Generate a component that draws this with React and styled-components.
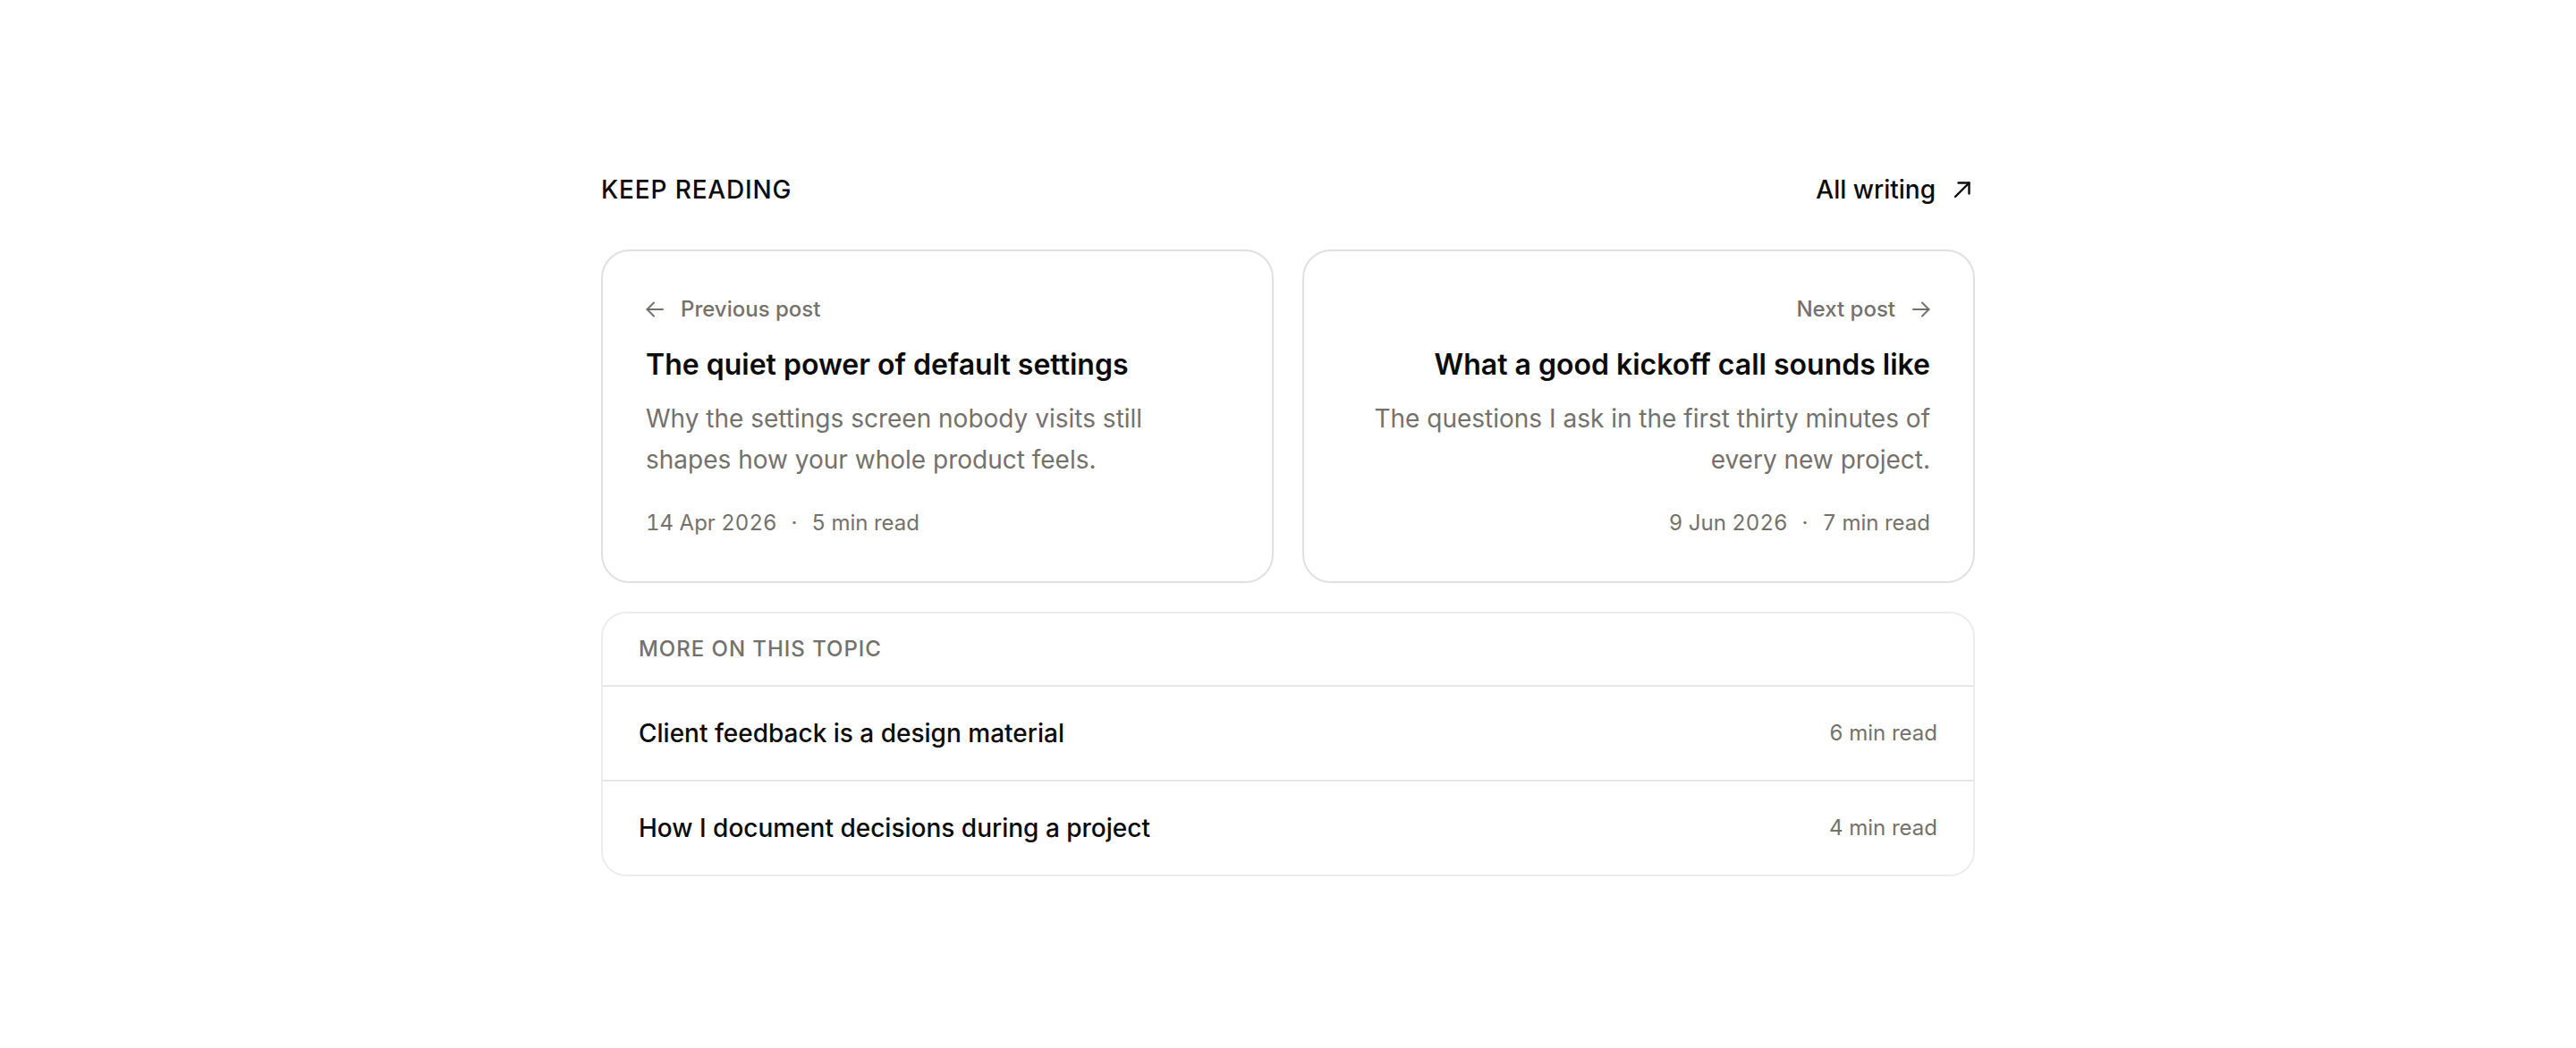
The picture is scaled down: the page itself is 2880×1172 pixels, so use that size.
import React from 'react'
import styled, { createGlobalStyle } from 'styled-components'

const GlobalStyle = createGlobalStyle`
  html, body {
    margin: 0;
    padding: 0;
    background: #ffffff;
  }
  body {
    font-family: Inter, "Noto Sans", "Liberation Sans", sans-serif;
    color: #0b0b0b;
    -webkit-font-smoothing: antialiased;
  }
  * {
    box-sizing: border-box;
  }
`;

const muted = '#74716d';

const posts = {
    prev: {
        label: 'Previous post',
        title: 'The quiet power of default settings',
        excerpt: 'Why the settings screen nobody visits still shapes how your whole product feels.',
        date: '14 Apr 2026',
        read: '5 min read',
    },
    next: {
        label: 'Next post',
        title: 'What a good kickoff call sounds like',
        excerpt: 'The questions I ask in the first thirty minutes of every new project.',
        date: '9 Jun 2026',
        read: '7 min read',
    },
};

const related = [
    { title: 'Client feedback is a design material', read: '6 min read' },
    { title: 'How I document decisions during a project', read: '4 min read' },
];

function ArrowLeft() {
    return (
        <svg width="20" height="18" viewBox="0 0 20 18" fill="none" stroke="currentColor" strokeWidth="2" strokeLinecap="round" strokeLinejoin="round">
            <path d="M19 9H1.5" />
            <path d="M9 1.5 1.5 9 9 16.5" />
        </svg>
    )
}

function ArrowRight() {
    return (
        <svg width="20" height="18" viewBox="0 0 20 18" fill="none" stroke="currentColor" strokeWidth="2" strokeLinecap="round" strokeLinejoin="round">
            <path d="M1 9h17.5" />
            <path d="M11 1.5 18.5 9 11 16.5" />
        </svg>
    )
}

function ArrowUpRight() {
    return (
        <svg width="20" height="20" viewBox="0 0 20 20" fill="none" stroke="currentColor" strokeWidth="2.4" strokeLinecap="round" strokeLinejoin="round">
            <path d="M2 18 17.5 2.5" />
            <path d="M5.5 2.5h12v12" />
        </svg>
    )
}

function PostCard({ post, align }) {
    const right = align === 'right'
    return (
        <Card $right={right}>
            <CardLabel>
                {!right && <ArrowLeft />}
                <span>{post.label}</span>
                {right && <ArrowRight />}
            </CardLabel>
            <CardTitle>{post.title}</CardTitle>
            <Excerpt>{post.excerpt}</Excerpt>
            <Meta>
                <span>{post.date}</span>
                <Dot>·</Dot>
                <span>{post.read}</span>
            </Meta>
        </Card>
    )
}

function App() {
    return (
        <>
            <GlobalStyle />
            <Page>
                <Section>
                    <Header>
                        <Eyebrow>KEEP READING</Eyebrow>
                        <AllLink href="#">
                            All writing
                            <ArrowUpRight />
                        </AllLink>
                    </Header>
                    <CardGrid>
                        <PostCard post={posts.prev} />
                        <PostCard post={posts.next} align="right" />
                    </CardGrid>
                    <TopicBox>
                        <TopicHead>MORE ON THIS TOPIC</TopicHead>
                        {related.map((item) => (
                            <TopicRow key={item.title}>
                                <TopicTitle>{item.title}</TopicTitle>
                                <TopicRead>{item.read}</TopicRead>
                            </TopicRow>
                        ))}
                    </TopicBox>
                </Section>
            </Page>
        </>
    )
}

const Page = styled.main`
    padding: 192px 0 160px;
`;

const Section = styled.section`
    max-width: 1536px;
    margin: 0 auto;
    display: flex;
    flex-direction: column;
`;

const Header = styled.div`
    display: flex;
    align-items: center;
    justify-content: space-between;
    margin-bottom: 47px;
`;

const Eyebrow = styled.h2`
    margin: 0;
    font-size: 28px;
    line-height: 40px;
    font-weight: 500;
    letter-spacing: 0.03em;
    color: #0b0b0b;
`;

const AllLink = styled.a`
    display: flex;
    align-items: center;
    gap: 20px;
    padding-right: 4px;
    font-size: 28px;
    line-height: 40px;
    font-weight: 500;
    color: #0b0b0b;
    text-decoration: none;
`;

const CardGrid = styled.div`
    display: grid;
    grid-template-columns: 1fr 1fr;
    gap: 32px;
`;

const Card = styled.a`
    display: flex;
    flex-direction: column;
    align-items: ${(p) => (p.$right ? 'flex-end' : 'flex-start')};
    text-align: ${(p) => (p.$right ? 'right' : 'left')};
    padding: 49px 48px;
    border: 2px solid #e0e0e0;
    border-radius: 32px;
    background: #fff;
`;

const CardLabel = styled.div`
    display: flex;
    align-items: center;
    gap: 19px;
    font-size: 24px;
    line-height: 32px;
    font-weight: 500;
    color: ${muted};
`;

const CardTitle = styled.h3`
    margin: 26px 0 0;
    font-size: 32px;
    line-height: 40px;
    font-weight: 600;
    color: #0b0b0b;
`;

const Excerpt = styled.p`
    margin: 17px 0 0;
    max-width: 632px;
    font-size: 28px;
    line-height: 46px;
    color: ${muted};
`;

const Meta = styled.div`
    display: flex;
    align-items: center;
    gap: 14px;
    margin-top: 32px;
    font-size: 24px;
    line-height: 32px;
    font-variant-numeric: tabular-nums;
    color: ${muted};
`;

const Dot = styled.span`
    padding: 0 2px;
`;

const TopicBox = styled.div`
    margin-top: 32px;
    border: 2px solid #ececec;
    border-radius: 28px;
    overflow: hidden;
`;

const TopicHead = styled.div`
    padding: 24px 40px;
    font-size: 24px;
    line-height: 32px;
    font-weight: 500;
    letter-spacing: 0.04em;
    color: ${muted};
    border-bottom: 2px solid #e7e7e7;
`;

const TopicRow = styled.a`
    display: flex;
    align-items: center;
    justify-content: space-between;
    padding: 32px 40px;
    text-decoration: none;

    & + & {
        border-top: 2px solid #e7e7e7;
    }
`;

const TopicTitle = styled.span`
    font-size: 28px;
    line-height: 40px;
    font-weight: 500;
    color: #0b0b0b;
`;

const TopicRead = styled.span`
    font-size: 24px;
    line-height: 32px;
    color: ${muted};
`;

export default App
